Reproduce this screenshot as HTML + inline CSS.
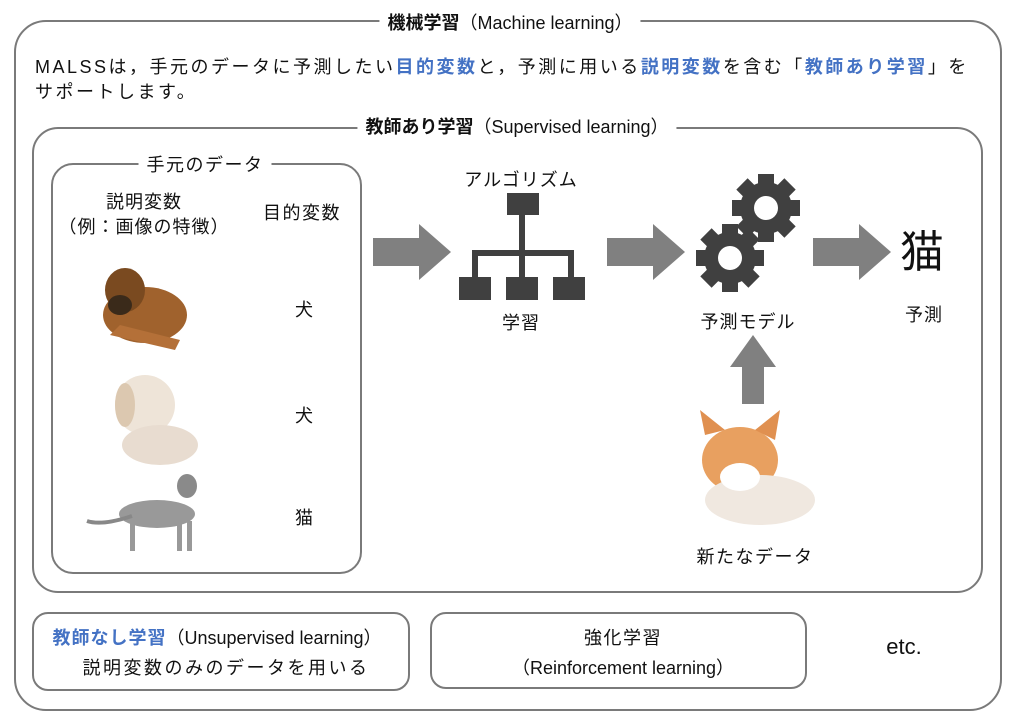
<!DOCTYPE html>
<html><head><meta charset="utf-8"><style>
body{margin:0;width:1016px;height:721px;background:#fff;position:relative;overflow:hidden;font-family:"Liberation Sans","Noto Sans CJK JP",sans-serif;color:#111}
.a{position:absolute;white-space:nowrap}
.box{position:absolute;border:2px solid #7a7a7a;box-sizing:border-box}
.c{transform:translateX(-50%)}
.b{color:#4472c4;font-weight:bold}
.t{background:#fff;padding:0 8px}
.s{letter-spacing:1.5px}
</style></head><body>
<div class="box" style="left:14px;top:20px;width:988px;height:691px;border-radius:32px"></div>
<div class="a c t" style="left:510px;top:9px;font-size:18px"><b>機械学習</b>（Machine learning）</div>
<div class="a" style="left:35px;top:55px;font-size:18px;line-height:25px;letter-spacing:2.5px">MALSSは，手元のデータに予測したい<span class="b">目的変数</span>と，予測に用いる<span class="b">説明変数</span>を含む「<span class="b">教師あり学習</span>」を<br>サポートします。</div>

<div class="box" style="left:32px;top:127px;width:951px;height:466px;border-radius:26px"></div>
<div class="a c t" style="left:517px;top:113px;font-size:18px"><b>教師あり学習</b>（Supervised learning）</div>

<div class="box" style="left:51px;top:163px;width:311px;height:411px;border-radius:22px"></div>
<div class="a c t s" style="left:205px;top:151px;font-size:18px">手元のデータ</div>
<div class="a c" style="left:144px;top:190px;font-size:18px;text-align:center;line-height:25px;letter-spacing:1px">説明変数<br>（例：画像の特徴）</div>
<div class="a c s" style="left:302px;top:199px;font-size:18px">目的変数</div>
<div class="a c" style="left:304px;top:296px;font-size:18px">犬</div>
<div class="a c" style="left:304px;top:402px;font-size:18px">犬</div>
<div class="a c" style="left:304px;top:504px;font-size:18px">猫</div>

<svg class="a" style="left:80px;top:255px" width="115" height="110"><ellipse cx="65" cy="60" rx="42" ry="28" fill="#a0622d"/><ellipse cx="45" cy="35" rx="20" ry="22" fill="#7a4a20"/><ellipse cx="40" cy="50" rx="12" ry="10" fill="#3a2a1a"/><path d="M30 80 L95 95 L100 85 L40 70Z" fill="#b47038"/></svg>
<svg class="a" style="left:100px;top:365px" width="100" height="100"><ellipse cx="45" cy="40" rx="30" ry="30" fill="#eee4d8"/><ellipse cx="60" cy="80" rx="38" ry="20" fill="#e8dcd0"/><ellipse cx="25" cy="40" rx="10" ry="22" fill="#dcc8b0"/></svg>
<svg class="a" style="left:82px;top:466px" width="125" height="90"><ellipse cx="75" cy="48" rx="38" ry="14" fill="#999"/><ellipse cx="105" cy="20" rx="10" ry="12" fill="#8a8a8a"/><path d="M50 50 Q20 60 5 55" stroke="#888" stroke-width="4" fill="none"/><rect x="48" y="55" width="5" height="30" fill="#999"/><rect x="95" y="55" width="5" height="30" fill="#999"/><rect x="105" y="55" width="5" height="30" fill="#999"/></svg>

<svg class="a" style="left:373px;top:224px" width="78" height="56"><path d="M0 14H46V0L78 28L46 56V42H0Z" fill="#808080"/></svg>
<svg class="a" style="left:607px;top:224px" width="78" height="56"><path d="M0 14H46V0L78 28L46 56V42H0Z" fill="#808080"/></svg>
<svg class="a" style="left:813px;top:224px" width="78" height="56"><path d="M0 14H46V0L78 28L46 56V42H0Z" fill="#808080"/></svg>
<svg class="a" style="left:730px;top:335px" width="46" height="69"><path d="M12 69V32H0L23 0L46 32H34V69Z" fill="#808080"/></svg>

<div class="a c" style="left:521px;top:166px;font-size:18px;letter-spacing:1px">アルゴリズム</div>
<svg class="a" style="left:455px;top:190px" width="135" height="112" fill="#404040"><rect x="52" y="3" width="32" height="22"/><rect x="64" y="25" width="6" height="40"/><rect x="17" y="60" width="102" height="6"/><rect x="17" y="60" width="6" height="28"/><rect x="64" y="60" width="6" height="28"/><rect x="113" y="60" width="6" height="28"/><rect x="4" y="87" width="32" height="23"/><rect x="51" y="87" width="32" height="23"/><rect x="98" y="87" width="32" height="23"/></svg>
<div class="a c" style="left:521px;top:309px;font-size:18px;letter-spacing:1px">学習</div>

<svg class="a" style="left:690px;top:170px" width="130" height="130">
<defs><g id="g"><circle r="26" fill="#404040"/><g fill="#404040"><rect x="-8" y="-34" width="16" height="68"/><rect x="-8" y="-34" width="16" height="68" transform="rotate(45)"/><rect x="-8" y="-34" width="16" height="68" transform="rotate(90)"/><rect x="-8" y="-34" width="16" height="68" transform="rotate(135)"/></g><circle r="12" fill="#fff"/></g></defs>
<use href="#g" x="76" y="38"/><use href="#g" x="40" y="88"/></svg>
<div class="a c" style="left:748px;top:308px;font-size:18px;letter-spacing:1px">予測モデル</div>

<div class="a c" style="left:922px;top:216px;font-size:44px">猫</div>
<div class="a c" style="left:924px;top:301px;font-size:18px;letter-spacing:1px">予測</div>

<svg class="a" style="left:680px;top:405px" width="160" height="125"><ellipse cx="60" cy="55" rx="38" ry="33" fill="#e8a060"/><path d="M25 30L20 5L45 25Z M75 25L100 5L95 35Z" fill="#e09050"/><ellipse cx="80" cy="95" rx="55" ry="25" fill="#f0e8e0"/><ellipse cx="60" cy="72" rx="20" ry="14" fill="#fff"/></svg>
<div class="a c" style="left:755px;top:543px;font-size:18px;letter-spacing:1.5px">新たなデータ</div>

<div class="box" style="left:32px;top:612px;width:378px;height:79px;border-radius:16px"></div>
<div class="a c" style="left:217px;top:624px;font-size:18px"><span class="b" style="letter-spacing:1px">教師なし学習</span>（Unsupervised learning）</div>
<div class="a c" style="left:226px;top:654px;font-size:18px;letter-spacing:2.5px">説明変数のみのデータを用いる</div>
<div class="box" style="left:430px;top:612px;width:377px;height:77px;border-radius:16px"></div>
<div class="a c" style="left:623px;top:624px;font-size:18px;letter-spacing:1.5px">強化学習</div>
<div class="a c" style="left:623px;top:654px;font-size:18px">（Reinforcement learning）</div>
<div class="a c" style="left:904px;top:634px;font-size:22px">etc.</div>
</body></html>
